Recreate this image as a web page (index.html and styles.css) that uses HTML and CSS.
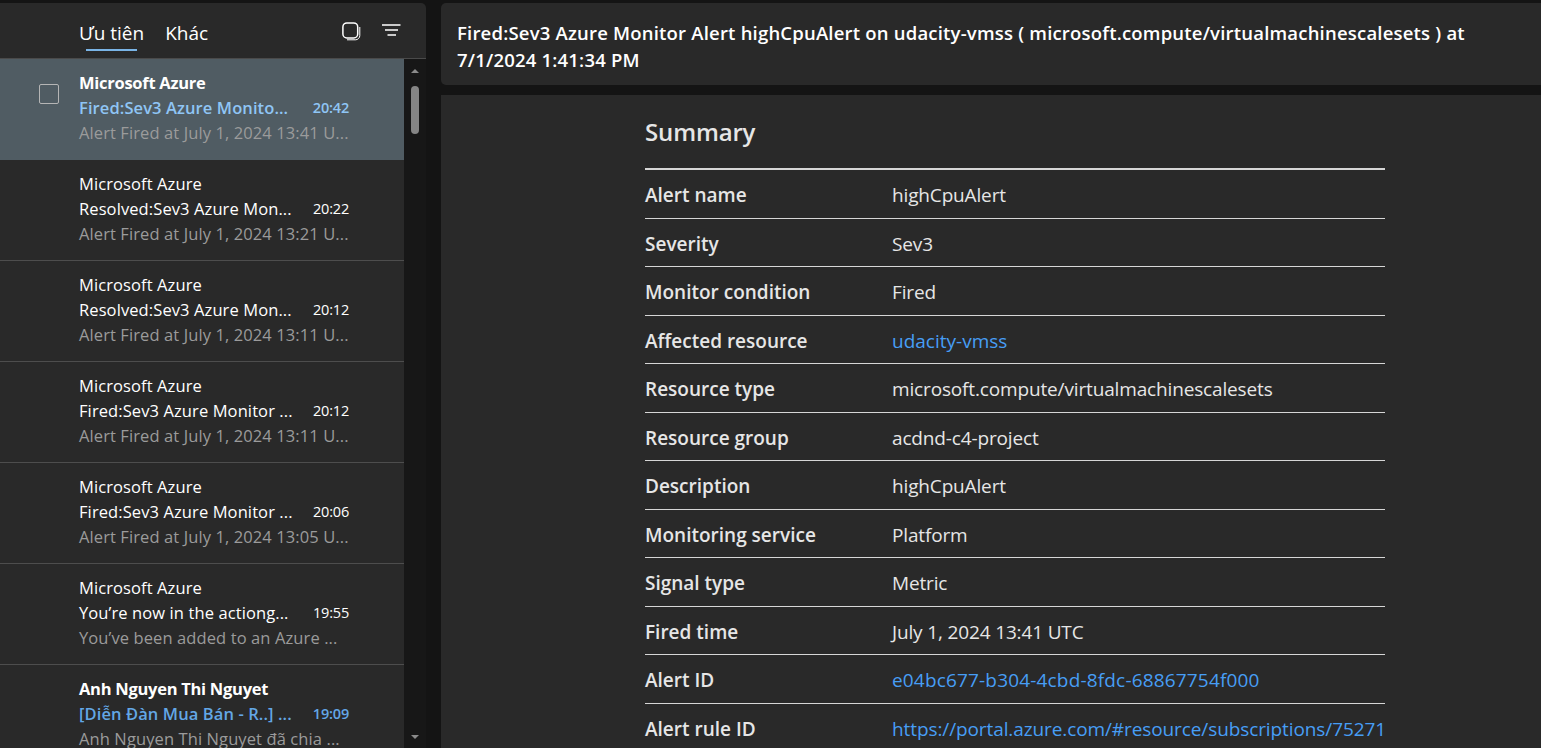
FILE: index.html
```html
<!DOCTYPE html>
<html lang="en">
<head>
  <meta charset="UTF-8">
  <meta name="viewport" content="width=device-width, initial-scale=1.0">
  <title>Mail</title>
  <link rel="stylesheet" href="styles.css">
</head>
<body>
  <div class="app">
    <section class="list-pane">
      <div class="tabs">
        <span class="tab tab-active">Ưu tiên</span>
        <span class="tab">Khác</span>
        <svg class="tool tool-select" width="19" height="19" viewBox="0 0 19 19" fill="none" stroke="#fff">
          <rect x="0.9" y="0.9" width="14.8" height="15" rx="4" stroke-width="1.500"/>
          <path d="M17.800 5v8.500a4.300 4.300 0 0 1-4.300 4.300H5" stroke-width="1"/>
        </svg>
        <svg class="tool tool-filter" width="19" height="12" viewBox="0 0 19 12" fill="none" stroke="#fff" stroke-width="1.600">
          <path d="M0 1h18.500M3 6h13M5.500 11h8.500"/>
        </svg>
      </div>
      <div class="list-body">
        <div class="messages">
          <div class="msg msg-selected">
            <div class="check-slot"><div class="check"></div></div>
            <div class="msg-text">
              <div class="sender sender-unread">Microsoft Azure</div>
              <div class="subject-row subject-open"><span class="subject">Fired:Sev3 Azure Monito...</span><span class="time">20:42</span></div>
              <div class="preview">Alert Fired at July 1, 2024 13:41 U...</div>
            </div>
          </div>
          <div class="msg">
            <div class="check-slot"></div>
            <div class="msg-text">
              <div class="sender">Microsoft Azure</div>
              <div class="subject-row"><span class="subject">Resolved:Sev3 Azure Mon...</span><span class="time">20:22</span></div>
              <div class="preview">Alert Fired at July 1, 2024 13:21 U...</div>
            </div>
          </div>
          <div class="msg">
            <div class="check-slot"></div>
            <div class="msg-text">
              <div class="sender">Microsoft Azure</div>
              <div class="subject-row"><span class="subject">Resolved:Sev3 Azure Mon...</span><span class="time">20:12</span></div>
              <div class="preview">Alert Fired at July 1, 2024 13:11 U...</div>
            </div>
          </div>
          <div class="msg">
            <div class="check-slot"></div>
            <div class="msg-text">
              <div class="sender">Microsoft Azure</div>
              <div class="subject-row"><span class="subject">Fired:Sev3 Azure Monitor ...</span><span class="time">20:12</span></div>
              <div class="preview">Alert Fired at July 1, 2024 13:11 U...</div>
            </div>
          </div>
          <div class="msg">
            <div class="check-slot"></div>
            <div class="msg-text">
              <div class="sender">Microsoft Azure</div>
              <div class="subject-row"><span class="subject">Fired:Sev3 Azure Monitor ...</span><span class="time">20:06</span></div>
              <div class="preview">Alert Fired at July 1, 2024 13:05 U...</div>
            </div>
          </div>
          <div class="msg">
            <div class="check-slot"></div>
            <div class="msg-text">
              <div class="sender">Microsoft Azure</div>
              <div class="subject-row"><span class="subject">You’re now in the actiong...</span><span class="time">19:55</span></div>
              <div class="preview">You’ve been added to an Azure ...</div>
            </div>
          </div>
          <div class="msg">
            <div class="check-slot"></div>
            <div class="msg-text">
              <div class="sender sender-unread">Anh Nguyen Thi Nguyet</div>
              <div class="subject-row subject-unread"><span class="subject">[Diễn Đàn Mua Bán - R..] ...</span><span class="time">19:09</span></div>
              <div class="preview">Anh Nguyen Thi Nguyet đã chia ...</div>
            </div>
          </div>
        </div>
        <div class="scrollbar">
          <div class="arrow-up"></div>
          <div class="thumb"></div>
          <div class="arrow-down"></div>
        </div>
      </div>
    </section>

    <main class="read-pane">
      <header class="read-title">Fired:Sev3 Azure Monitor Alert highCpuAlert on udacity-vmss ( microsoft.compute/virtualmachinescalesets ) at<br>7/1/2024 1:41:34 PM</header>
      <div class="read-body">
        <div class="summary">
          <h2 class="summary-title">Summary</h2>
          <div class="row"><span class="label">Alert name</span><span>highCpuAlert</span></div>
          <div class="row"><span class="label">Severity</span><span>Sev3</span></div>
          <div class="row"><span class="label">Monitor condition</span><span>Fired</span></div>
          <div class="row"><span class="label">Affected resource</span><a class="link" href="#">udacity-vmss</a></div>
          <div class="row"><span class="label">Resource type</span><span>microsoft.compute/virtualmachinescalesets</span></div>
          <div class="row"><span class="label">Resource group</span><span>acdnd-c4-project</span></div>
          <div class="row"><span class="label">Description</span><span>highCpuAlert</span></div>
          <div class="row"><span class="label">Monitoring service</span><span>Platform</span></div>
          <div class="row"><span class="label">Signal type</span><span>Metric</span></div>
          <div class="row"><span class="label">Fired time</span><span>July 1, 2024 13:41 UTC</span></div>
          <div class="row"><span class="label">Alert ID</span><a class="link link-id" href="#">e04bc677-b304-4cbd-8fdc-68867754f000</a></div>
          <div class="row"><span class="label">Alert rule ID</span><a class="link link-url" href="#">https://portal.azure.com/#resource/subscriptions/75271</a></div>
        </div>
      </div>
    </main>
  </div>
</body>
</html>
```

FILE: styles.css
```css
* {
  box-sizing: border-box;
}
html, body {
  height: 100%;
  margin: 0;
  overflow: hidden;
}
body {
  background: #141414;
  color: #fff;
  font-family: "Open Sans", "Noto Sans", sans-serif;
}
.app {
  display: flex;
  height: 748px;
  padding-top: 3px;
  gap: 15px;
}

/* left column */
.list-pane {
  width: 426px;
  flex: none;
  display: flex;
  flex-direction: column;
  background: #292929;
  border-top-right-radius: 5px;
  overflow: hidden;
}
.tabs {
  height: 56px;
  flex: none;
  display: flex;
  align-items: flex-start;
  padding: 17px 0 0 79px;
  border-bottom: 1px solid #4a4a4a;
}
.tab {
  position: relative;
  font-size: 19px;
  line-height: 26px;
  margin-right: 21px;
}
.tab-active::after {
  content: "";
  position: absolute;
  left: 7px;
  right: 7px;
  top: 29px;
  height: 2px;
  background: #7ab4e6;
}
.tool {
  flex: none;
}
.tool-select {
  margin-left: 113px;
  margin-top: 2px;
}
.tool-filter {
  margin-left: 21px;
  margin-top: 4px;
}
.list-body {
  flex: 1;
  display: flex;
  min-height: 0;
}
.messages {
  width: 404px;
  flex: none;
}
.msg {
  height: 101px;
  display: flex;
  border-bottom: 1px solid #4d4d4d;
}
.msg-selected {
  background: #505c63;
  border-bottom-color: #505c63;
}
.check-slot {
  width: 79px;
  flex: none;
  padding: 25px 0 0 39px;
}
.check {
  width: 20px;
  height: 20px;
  border: 1px solid #b5b5b5;
  border-radius: 2px;
}
.msg-text {
  width: 270px;
  padding-top: 11px;
  font-size: 16.5px;
  line-height: 25px;
  letter-spacing: 0.1px;
  white-space: nowrap;
}
.sender-unread {
  font-weight: 700;
  letter-spacing: -0.27px;
}
.subject-row {
  display: flex;
  justify-content: space-between;
}
.time {
  font-size: 14.5px;
  letter-spacing: -0.2px;
}
.subject-open {
  color: #8fc5f5;
  font-weight: 600;
}
.subject-unread {
  color: #63a7e6;
  font-weight: 600;
}
.preview {
  color: #9b9b9b;
}
.scrollbar {
  width: 22px;
  flex: none;
  background: #171717;
  position: relative;
}
.thumb {
  position: absolute;
  left: 7px;
  top: 27px;
  width: 8px;
  height: 48px;
  background: #858585;
  border-radius: 4px;
}
.arrow-up, .arrow-down {
  position: absolute;
  left: 7px;
  width: 0;
  height: 0;
  border-left: 4px solid transparent;
  border-right: 4px solid transparent;
}
.arrow-up {
  top: 10px;
  border-bottom: 4px solid #8a8a8a;
}
.arrow-down {
  top: 676px;
  border-top: 4px solid #8a8a8a;
}

/* right column */
.read-pane {
  flex: 1;
  min-width: 0;
  display: flex;
  flex-direction: column;
  gap: 10px;
}
.read-title {
  height: 82px;
  flex: none;
  background: #292929;
  border-radius: 5px 0 0 5px;
  padding: 16px 0 0 16px;
  font-size: 18.5px;
  line-height: 27px;
  font-weight: 600;
  letter-spacing: 0.2px;
  white-space: nowrap;
}
.read-body {
  flex: 1;
  min-height: 0;
  background: #292929;
  padding-left: 204px;
  overflow: hidden;
  color: #e6e6e6;
}
.summary {
  width: 740px;
  font-size: 19px;
  letter-spacing: -0.15px;
}
.summary-title {
  margin: 0;
  height: 75px;
  padding-top: 19px;
  font-size: 24px;
  line-height: 36px;
  font-weight: 600;
  border-bottom: 2px solid #d6d6d6;
}
.row {
  height: 48.5px;
  display: flex;
  align-items: center;
  padding-top: 3px;
  border-bottom: 1px solid #d6d6d6;
  white-space: nowrap;
}
.label {
  width: 247px;
  flex: none;
  font-weight: 600;
  letter-spacing: 0;
}
.link {
  color: #479ef5;
  text-decoration: none;
  letter-spacing: 0;
}
.link-id {
  letter-spacing: 0.17px;
}
.link-url {
  letter-spacing: -0.1px;
}
```
